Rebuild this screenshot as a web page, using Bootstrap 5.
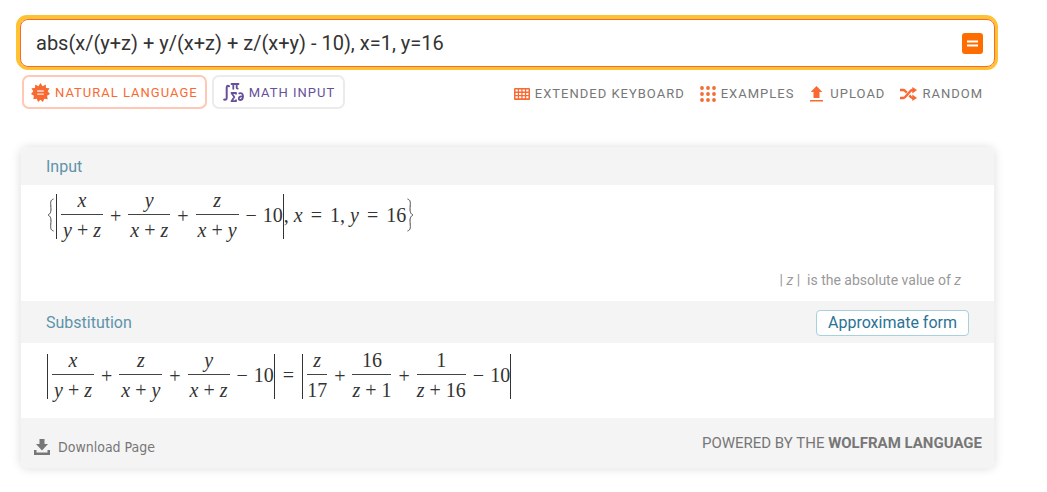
<!DOCTYPE html>
<html lang="en">
<head>
<meta charset="utf-8">
<meta name="viewport" content="width=device-width, initial-scale=1">
<title>Wolfram|Alpha</title>
<link href="https://cdn.jsdelivr.net/npm/bootstrap@5.3.0/dist/css/bootstrap.min.css" rel="stylesheet">
<style>
body{font-family:Roboto,"Liberation Sans",sans-serif;color:#333;background:#fff}
.page{padding:19px 52px 24px 20px}
svg{display:block;flex:none}
.query{height:48px;border:1px solid #f96932;border-radius:8px;box-shadow:0 0 0 3px #ffc230,-1px -1px 0 3px #ffc230;padding:0 11px 0 15px}
.query input{font-size:20px;line-height:24px;color:#333;background:none;outline:0;min-width:0}
.go{width:21px;height:21px;border-radius:3px;background:#ff6d00}
.tools{padding:8px 12px 0 2px}
.modes{gap:5px}
.mode{height:34px;gap:5px;border:2px solid #ebebeb;border-radius:7px;background:#fff;color:#675099;font-size:13px;line-height:16px;letter-spacing:1px;padding:1px 8px 0 9px}
.mode.current{border-color:#ffc7b4;color:#f96932;padding:1px 7px 0}
.links{gap:15px;padding-top:3px}
.tool{gap:5px;color:#777;font-size:13px;line-height:16px;letter-spacing:1px}
.results{margin-top:38px;border-radius:8px;box-shadow:0 0 10px rgba(0,0,0,.13);overflow:hidden;border:1px solid #f0f0f0;border-top:0}
.bar-head{background:#f4f4f4;height:42px;padding:2px 25px 0}
.bar-head.first{height:38px}
.bar-head h2{font-size:16px;line-height:20px;font-weight:400;color:#5e93aa}
.approx{height:26px;border:1px solid #a9d0df;border-radius:4px;background:#fff;color:#2b7296;font-size:16px;line-height:20px;padding:0 11px}
.pod{padding:5px 33px 16px 26px}
.pod.first{padding-top:3px;padding-bottom:11px}
.formula{font-family:"Liberation Serif",serif;font-size:20px;line-height:24px;color:#333;white-space:pre}
.frac{display:flex;flex-direction:column;text-align:center}
.frac .num{padding-bottom:2px;border-bottom:1px solid #444}
.frac .den{padding:3px 2px 0}
.frac.tight .den{padding:3px 0 0}
.op{margin:2px 7px 0}
.eq{margin:0 8px}
.minus{margin:0 6px 0 7px}
.absbar{width:1px;height:45px;background:#333;margin-top:3px}
.open{margin-right:4px}
.brace + .open{margin-left:1px}
.hint{font-size:14px;line-height:20px;color:#999;margin-top:28px}
.foot{background:#f4f4f4;height:50px;padding:0 12px 0 13px}
.dl{font-family:"DejaVu Sans Condensed","DejaVu Sans",sans-serif;font-size:14px;line-height:20px;color:#777;padding-top:8px}
.power{font-size:15px;line-height:20px;color:#777}
</style>
</head>
<body>
<main class="page">
<form class="query d-flex align-items-center" onsubmit="return false">
<input class="flex-grow-1 border-0 p-0" type="text" aria-label="Query" value="abs(x/(y+z) + y/(x+z) + z/(x+y) - 10), x=1, y=16">
<button class="go border-0 p-0" type="submit" aria-label="Compute"><svg width="21" height="21"><path d="M5 8.500h11M5 12.500h11" stroke="#fff" stroke-width="2"/></svg></button>
</form>
<div class="tools d-flex align-items-center justify-content-between">
<div class="modes d-flex">
<button type="button" class="mode current d-flex align-items-center"><svg width="19" height="19" viewBox="-10 -10 20 20"><path fill="#f96932" d="M0-10 2.200-6.700 5.500-8.500 5.800-4.700 9.500-4.500 7.600-1.300 10 1.500 6.900 3.300 7.600 7 4 6.700 2.500 10 0 7.500-2.500 10-4 6.700-7.600 7-6.900 3.300-10 1.500-7.600-1.300-9.500-4.500-5.800-4.700-5.500-8.500-2.200-6.700Z"/><path d="M-3.500-1.500h7M-3.500 1.700h7" stroke="#ffe5dc" stroke-width="1.500"/></svg><span>NATURAL LANGUAGE</span></button>
<button type="button" class="mode d-flex align-items-center"><svg width="21" height="22" viewBox="0 0 21 22" fill="none" stroke="#675099" stroke-linecap="round" stroke-linejoin="round"><path stroke-width="2" d="M6 4.200C4.700 3 3.800 4 3.700 5.500v10c0 2-1 2.800-2.500 2"/><path stroke-width="1.800" d="M8.500 2h7M10.300 2.200v4.600M13.700 2.200v3.500q0 1 1 .9"/><path stroke-width="1.800" stroke-linecap="butt" d="M13 12.500v-1.500H8.500l2.800 4-2.800 4.200H13v-1.700"/><path stroke-width="1.800" d="M16.300 11.300c2-.8 3.700.4 3.700 3 0 2.300-1 3.700-2.400 3.700-1.100 0-1.800-.7-1.800-1.600 0-1.700 2.400-2.600 4-1.500"/></svg><span>MATH INPUT</span></button>
</div>
<nav class="links d-flex align-items-center" aria-label="Input tools">
<a href="#" class="tool d-flex align-items-center text-decoration-none"><svg width="16" height="12"><path fill="#f96932" fill-rule="evenodd" d="M1 0h14q1 0 1 1v10q0 1-1 1H1q-1 0-1-1V1q0-1 1-1ZM1.500 1.500v2h2.300v-2ZM5 1.500v2h2.300v-2ZM8.600 1.500v2h2.300v-2ZM12.200 1.500v2h2.300v-2ZM1.500 4.900v2h2.300v-2ZM5 4.900v2h2.300v-2ZM8.600 4.900v2h2.300v-2ZM12.200 4.900v2h2.300v-2ZM1.500 8.300v2h2.300v-2ZM5 8.300v2h2.300v-2ZM8.600 8.300v2h2.300v-2ZM12.200 8.300v2h2.300v-2Z"/></svg><span>EXTENDED KEYBOARD</span></a>
<a href="#" class="tool d-flex align-items-center text-decoration-none"><svg width="16" height="16" fill="#f96932"><circle cx="2" cy="2" r="1.900"/><circle cx="8" cy="2" r="1.900"/><circle cx="14" cy="2" r="1.900"/><circle cx="2" cy="8" r="1.900"/><circle cx="8" cy="8" r="1.900"/><circle cx="14" cy="8" r="1.900"/><circle cx="2" cy="14" r="1.900"/><circle cx="8" cy="14" r="1.900"/><circle cx="14" cy="14" r="1.900"/></svg><span>EXAMPLES</span></a>
<a href="#" class="tool d-flex align-items-center text-decoration-none"><svg width="16" height="16" fill="#f96932"><path d="M7.500 0 13.300 6H10.500v6h-6V6H1.700ZM1 14h13v1.600H1Z"/></svg><span>UPLOAD</span></a>
<a href="#" class="tool d-flex align-items-center text-decoration-none"><svg width="17" height="14"><path fill="none" stroke="#f96932" stroke-width="2.300" d="M0 3h3q1.300 0 2.200 1L6.800 5.600M9.300 8.400l1.400 1.500q.9 1 2.300 1H14M0 11h3q1.300 0 2.200-1L10.500 4q.9-1 2.300-1H14"/><path fill="#f96932" d="M12.300 0 17 3l-4.700 3.500ZM12.300 7.500 17 11l-4.700 3Z"/></svg><span>RANDOM</span></a>
</nav>
</div>

<div class="results">
<section>
<header class="bar-head first d-flex align-items-center"><h2 class="mb-0">Input</h2></header>
<div class="pod first">
<div class="formula d-flex align-items-center"><svg class="brace" width="8" height="34" viewBox="0 0 8 34" fill="none" stroke="#444"><path d="M6.500 1C3.500 2 3.500 4 3.800 8s.6 7-2.600 9c3.200 2 2.900 5 2.600 9s-.3 6 2.700 7"/></svg><span class="absbar open"></span>
<span class="frac"><i class="num">x</i><span class="den"><i>y</i> + <i>z</i></span></span><span class="op">+</span>
<span class="frac"><i class="num">y</i><span class="den"><i>x</i> + <i>z</i></span></span><span class="op">+</span>
<span class="frac"><i class="num">z</i><span class="den"><i>x</i> + <i>y</i></span></span><span class="minus">−</span><span>10</span><span class="absbar"></span><span>, <i>x</i></span><span class="eq">=</span><span>1, <i>y</i></span><span class="eq">=</span><span>16</span><svg width="8" height="34" viewBox="0 0 8 34" fill="none" stroke="#444"><path d="M1.500 1c3 1 3 3 2.700 7s-.6 7 2.600 9c-3.200 2-2.900 5-2.600 9s.3 6-2.700 7"/></svg></div>
<p class="hint mb-0 text-end">| <i>z</i> |&nbsp; is the absolute value of <i>z</i></p>
</div>
</section>
<section>
<header class="bar-head d-flex align-items-center justify-content-between"><h2 class="mb-0">Substitution</h2><button type="button" class="approx">Approximate form</button></header>
<div class="pod">
<div class="formula d-flex align-items-center"><span class="absbar open"></span>
<span class="frac"><i class="num">x</i><span class="den"><i>y</i> + <i>z</i></span></span><span class="op">+</span>
<span class="frac"><i class="num">z</i><span class="den"><i>x</i> + <i>y</i></span></span><span class="op">+</span>
<span class="frac"><i class="num">y</i><span class="den"><i>x</i> + <i>z</i></span></span><span class="minus">−</span><span>10</span><span class="absbar"></span><span class="eq">=</span><span class="absbar open"></span>
<span class="frac tight"><i class="num">z</i><span class="den">17</span></span><span class="op">+</span>
<span class="frac tight"><span class="num">16</span><span class="den"><i>z</i> + 1</span></span><span class="op">+</span>
<span class="frac tight"><span class="num">1</span><span class="den"><i>z</i> + 16</span></span><span class="minus">−</span><span>10</span><span class="absbar"></span></div>
</div>
</section>
<footer class="foot d-flex align-items-center justify-content-between">
<a href="#" class="dl d-flex align-items-center text-decoration-none"><svg width="16" height="16" class="me-2" fill="#777"><path d="M5.500 0h5v5H14l-6 6.500L2 5h3.500ZM0 11h2.500v2.500h11V11H16v5H0Z"/></svg><span>Download Page</span></a>
<span class="power">POWERED BY THE <b>WOLFRAM LANGUAGE</b></span>
</footer>
</div>
</main>
<script src="https://cdn.jsdelivr.net/npm/bootstrap@5.3.0/dist/js/bootstrap.bundle.min.js"></script>
</body>
</html>
